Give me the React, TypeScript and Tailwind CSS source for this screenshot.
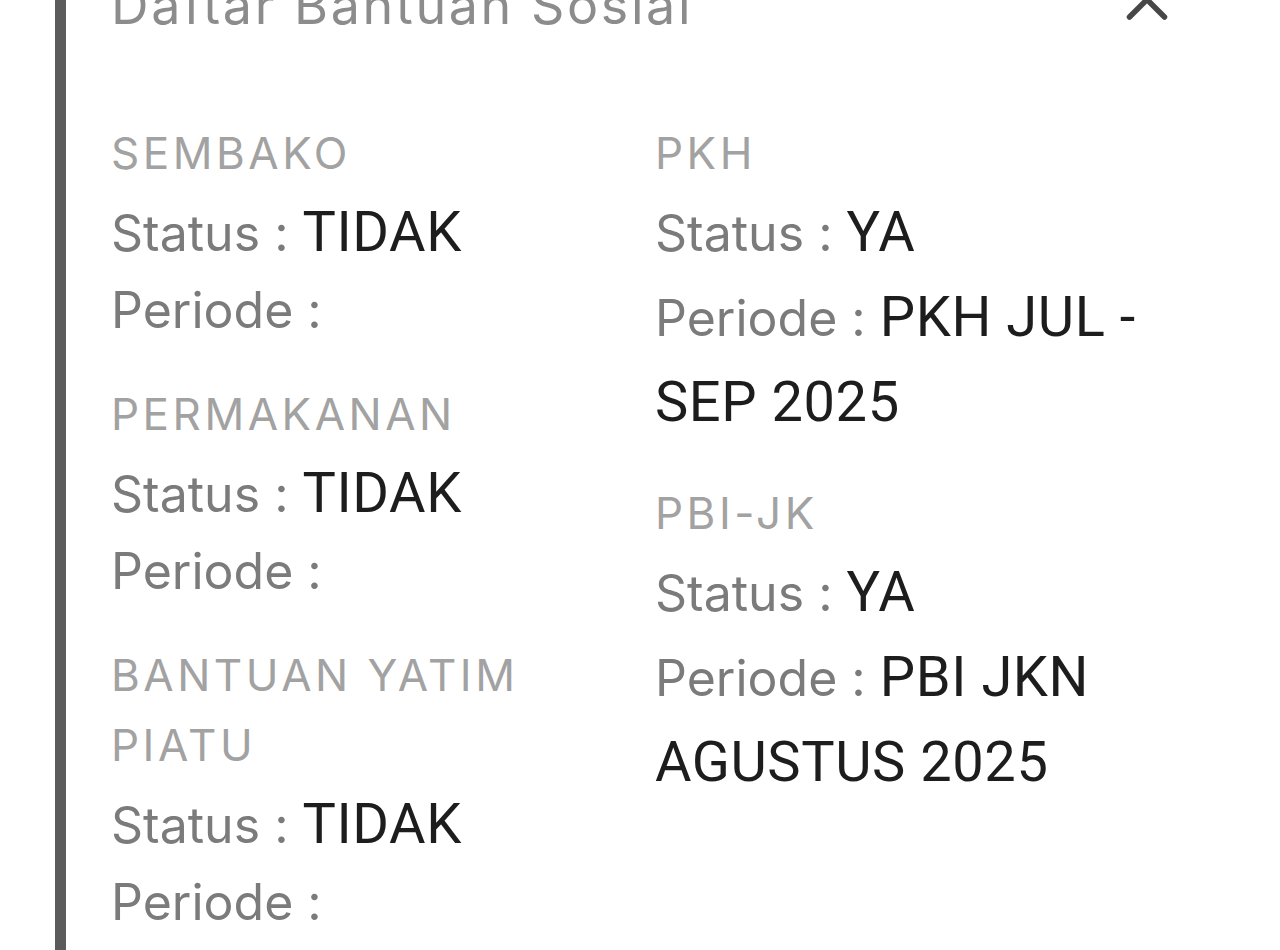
import React from "react";

type Aid = { name: string; status: string; period?: string };

const leftAids: Aid[] = [
  { name: "SEMBAKO", status: "TIDAK" },
  { name: "PERMAKANAN", status: "TIDAK" },
  { name: "BANTUAN YATIM PIATU", status: "TIDAK" },
];

const rightAids: Aid[] = [
  { name: "PKH", status: "YA", period: "PKH JUL - SEP 2025" },
  { name: "PBI-JK", status: "YA", period: "PBI JKN AGUSTUS 2025" },
];

const labelFont = "font-['Inter','Noto_Sans',sans-serif]";
const valueFont = "font-['Roboto','Liberation_Sans',sans-serif]";

function AidItem({ aid, first }: { aid: Aid; first: boolean }) {
  return (
    <div className={first ? "" : "mt-[33px]"}>
      <div
        className={`${labelFont} pb-[2px] text-[44px] leading-[70px] tracking-[0.08em] text-[#a2a2a2]`}
      >
        {aid.name}
      </div>
      <div className={`${labelFont} text-[50px] leading-[84px] text-[#7b7b7b]`}>
        Status :{" "}
        <span className={`${valueFont} text-[56px] tracking-[0.01em] text-[#1d1d1d]`}>
          {aid.status}
        </span>
      </div>
      <div
        className={`${labelFont} text-[50px] text-[#7b7b7b] ${
          aid.period ? "leading-[84px]" : "leading-[71px]"
        }`}
      >
        Periode :{" "}
        {aid.period && (
          <span className={`${valueFont} text-[56px] tracking-[0.01em] text-[#1d1d1d]`}>
            {aid.period}
          </span>
        )}
      </div>
    </div>
  );
}

export default function App() {
  return (
    <div className="h-[950px] w-[1280px] overflow-hidden bg-white">
      <div className="ml-[55px] flex h-full flex-col border-l-[11px] border-[#5b5b5b] pl-[45px] pr-[108px]">
        {/* panel header, scrolled partly out of view */}
        <div className="-mt-[24px] flex h-[60px] shrink-0 items-start justify-between">
          <div
            className={`${labelFont} text-[52px] leading-[60px] tracking-[0.05em] text-[#8c8c8c]`}
          >
            Daftar Bantuan Sosial
          </div>
          <svg
            className="mr-[4px] mt-[20px]"
            width="42"
            height="28"
            viewBox="0 0 42 28"
            fill="none"
            stroke="#474747"
            strokeWidth="5.5"
            strokeLinecap="round"
            strokeLinejoin="round"
          >
            <path d="M3.5 21 L21 3.5 L38.5 21" />
          </svg>
        </div>

        <div className="mt-[82px] grid grid-cols-[515px_1fr] gap-x-[29px]">
          <div>
            {leftAids.map((a, i) => (
              <AidItem key={a.name} aid={a} first={i === 0} />
            ))}
          </div>
          <div>
            {rightAids.map((a, i) => (
              <AidItem key={a.name} aid={a} first={i === 0} />
            ))}
          </div>
        </div>
      </div>
    </div>
  );
}
